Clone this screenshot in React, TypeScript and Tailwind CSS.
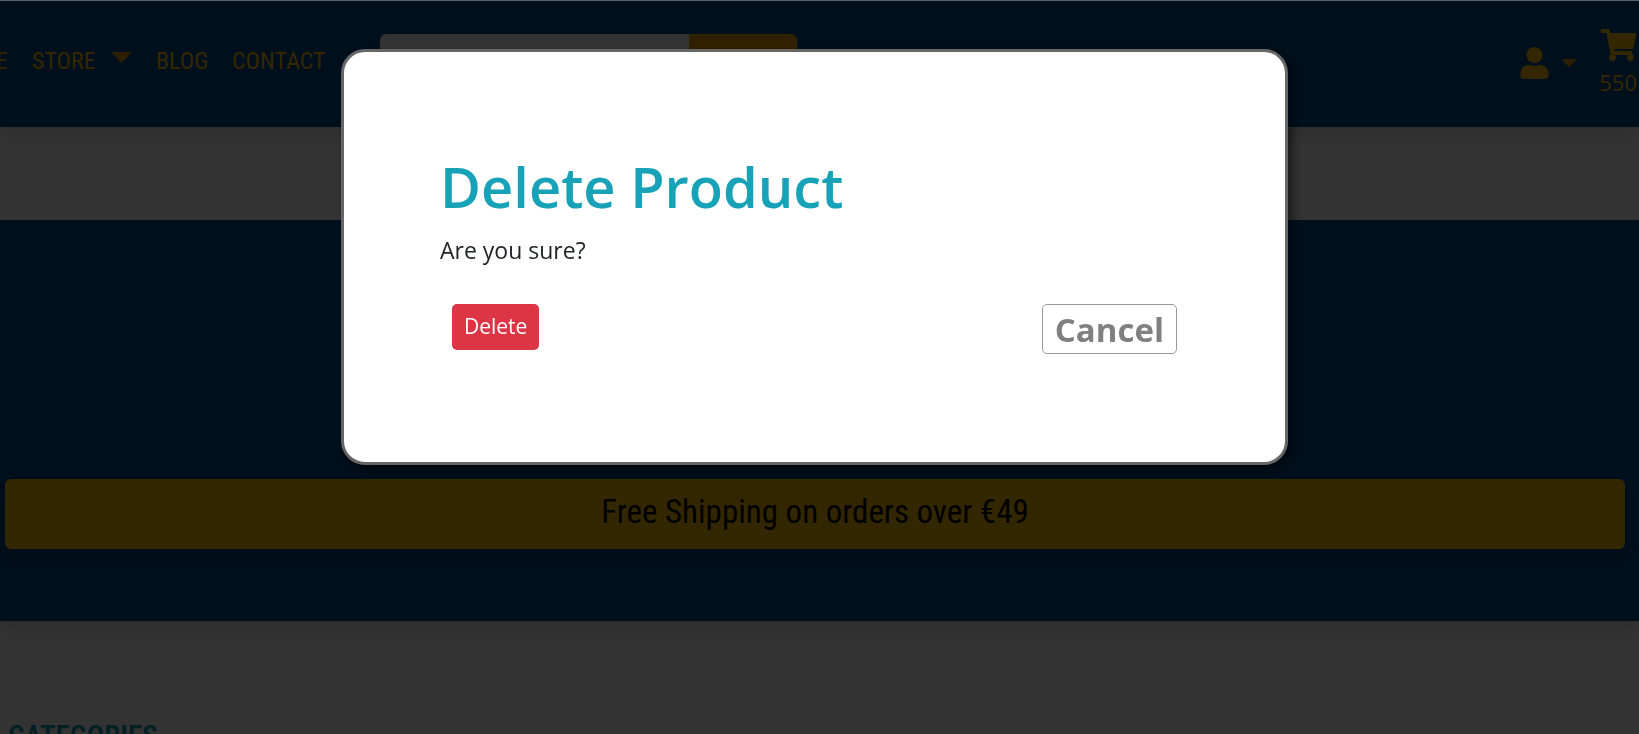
import { FaShoppingCart, FaUser } from "react-icons/fa";

const condensed = "font-['Roboto_Condensed','Liberation_Sans_Narrow',sans-serif]";

function Navbar() {
  return (
    <header className="flex h-[126px] items-start bg-[#004b8c] shadow-[0_8px_16px_rgba(0,0,0,0.1)]">
      <nav className={`flex h-[120px] items-center text-[24px] text-[#ffc107] ${condensed}`}>
        <a href="#home" className="flex w-2 justify-end overflow-hidden">HOME</a>
        <a href="#store" className="ml-6 flex w-[100px] items-center justify-between">
          STORE
          <svg className="mb-2 h-[11px] w-[21px]" viewBox="0 0 21 11" fill="#e59a00" aria-hidden="true">
            <path d="M0 0h21L10.500 11z" />
          </svg>
        </a>
        <a href="#blog" className="ml-6 w-[52px]">BLOG</a>
        <a href="#contact" className="ml-6 w-[90px]">CONTACT</a>
      </nav>
      <form className="mt-[33px] ml-[58px] flex h-[54px]" onSubmit={(e) => e.preventDefault()}>
        <input aria-label="Search products" className="w-[309px] rounded-l-md bg-white px-3" />
        <button type="submit" aria-label="Search" className="w-[108px] rounded-r-md border border-[#ffc107] bg-[#f0a000]" />
      </form>
      <div className="mr-[2px] ml-auto flex items-start text-[#ffc107]">
        <button type="button" aria-label="Account" className="mt-[46px] flex items-center">
          <FaUser className="h-8 w-[29px]" />
          <svg className="ml-3 h-2 w-4" viewBox="0 0 16 8" fill="#e59a00" aria-hidden="true">
            <path d="M0 0h16L8 8z" />
          </svg>
        </button>
        <a href="#cart" className="mt-7 ml-[22px] flex flex-col items-center font-['Open_Sans',sans-serif] text-[22px] leading-[42px]">
          <FaShoppingCart className="h-8 w-[37px]" />
          550
        </a>
      </div>
    </header>
  );
}

function DeleteDialog() {
  return (
    <div className="fixed inset-0 flex items-start justify-center border-t border-[#5c6268] bg-black/80 pt-12 pr-[10px]">
      <div
        role="dialog"
        aria-modal="true"
        aria-labelledby="dialog-title"
        className="w-full max-w-[947px] rounded-3xl border-3 border-[#666666] bg-white p-24 font-['Open_Sans',sans-serif] shadow-[5px_5px_10px_rgba(0,0,0,0.5)]"
      >
        <h1 id="dialog-title" className="text-[56px] leading-[76px] font-semibold text-[#17a2b8]">Delete Product</h1>
        <p className="mt-2 text-[23px] leading-9 text-[#212529]">Are you sure?</p>
        <div className="mt-9 flex items-start justify-between px-3 pb-3">
          <button type="button" className="h-[46px] rounded-[5px] bg-[#dc3545] px-3 text-[21px] text-white">Delete</button>
          <button type="button" className="h-[50px] rounded-[5px] border border-[#999999] px-3 pt-px text-[33px] leading-[48px] font-bold text-[#808080]">Cancel</button>
        </div>
      </div>
    </div>
  );
}

export default function App() {
  return (
    <div className="min-h-screen bg-white pt-px">
      <div className="h-[733px] max-h-screen overflow-hidden">
        <Navbar />
        <main>
          <section className="mt-[93px] flex h-[401px] flex-col justify-end bg-[#004b8c] pr-[14px] pb-[72px] pl-[5px] shadow-[0_8px_16px_rgba(0,0,0,0.15)]">
            <p className={`rounded-md bg-[#ffc107] pb-1 text-center text-[33px] leading-[66px] text-black shadow-[0_8px_16px_rgba(0,0,0,0.15)] ${condensed}`}>
              Free Shipping on orders over €49
            </p>
          </section>
          <h2 className={`mt-[97px] ml-2 text-[29px] leading-9 font-semibold text-[#17a2b8] ${condensed}`}>CATEGORIES</h2>
        </main>
      </div>
      <DeleteDialog />
    </div>
  );
}
